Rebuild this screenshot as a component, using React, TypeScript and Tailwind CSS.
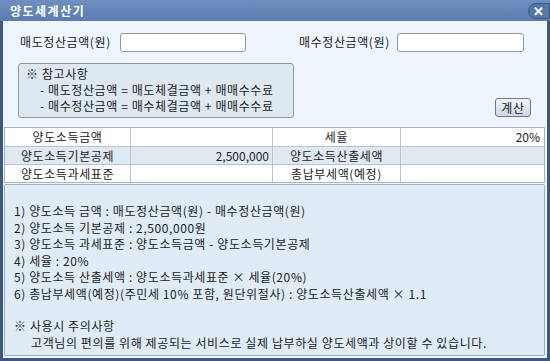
import React from 'react';

const font = { fontFamily: '"Noto Sans CJK KR", "Noto Sans", sans-serif' };

const rows = [
  { a: '양도소득금액', av: '', b: '세율', bv: '20%', shade: false },
  { a: '양도소득기본공제', av: '2,500,000', b: '양도소득산출세액', bv: '', shade: true },
  { a: '양도소득과세표준', av: '', b: '총납부세액(예정)', bv: '', shade: false },
];

const notes = [
  '1) 양도소득 금액 : 매도정산금액(원) - 매수정산금액(원)',
  '2) 양도소득 기본공제 : 2,500,000원',
  '3) 양도소득 과세표준 : 양도소득금액 - 양도소득기본공제',
  '4) 세율 : 20%',
  '5) 양도소득 산출세액 : 양도소득과세표준 × 세율(20%)',
  '6) 총납부세액(예정)(주민세 10% 포함, 원단위절사) : 양도소득산출세액 × 1.1',
];

export default function App() {
  return (
    <div
      className="w-[550px] h-[361px] bg-[#3d5a7e] p-[3px] pt-0 text-[12px] leading-[16px] text-[#222] tracking-[0.6px]"
      style={font}
    >
      {/* title bar */}
      <div className="h-[21px] -mx-[3px] px-[10px] flex items-center justify-between bg-gradient-to-b from-[#6f8fc0] to-[#5a7cae]">
        <span className="text-white font-bold text-[12px] tracking-[1.5px]">양도세계산기</span>
        <div className="w-[22px] h-[16px] -mr-[10px] rounded-l-full border border-[#3d5a80] bg-[#5576a6] flex items-center justify-center text-white font-bold text-[13px]">
          ✕
        </div>
      </div>

      <div className="h-[337px] bg-[#eef5fc] flex flex-col">
        {/* inputs */}
        <div className="flex items-center h-[42px] pl-[17px]">
          <span className="w-[100px]">매도정산금액(원)</span>
          <div className="w-[126px] h-[19px] bg-white border border-[#8e9aa8] rounded-[3px]" />
          <span className="ml-[53px] w-[98px]">매수정산금액(원)</span>
          <div className="w-[127px] h-[19px] bg-white border border-[#8e9aa8] rounded-[3px]" />
        </div>

        <div className="flex items-end pl-[15px] pr-[16px]">
          <div className="w-[276px] h-[55px] border border-[#8f9aa6] rounded-[3px] bg-[#dde8f1] px-[7px] pt-[2px] leading-[16px]">
            <div>※ 참고사항</div>
            <div className="pl-[14px]">- 매도정산금액 = 매도체결금액 + 매매수수료</div>
            <div className="pl-[14px]">- 매수정산금액 = 매수체결금액 + 매매수수료</div>
          </div>
          <div className="ml-auto mb-[1px] w-[36px] h-[19px] border border-[#6b7c90] rounded-[3px] bg-gradient-to-b from-[#f3f7fb] to-[#c9d6e4] flex items-center justify-center">
            계산
          </div>
        </div>

        {/* result table */}
        <div className="mt-[9px] ml-[1px] mr-[2px] border border-[#a7b4c2] bg-white">
          {rows.map((r, i) => (
            <div
              key={i}
              className={`flex h-[18px] items-center ${i > 0 ? 'border-t border-[#b9c4d0]' : ''} ${r.shade ? 'bg-[#dfe9f2]' : 'bg-white'}`}
            >
              <div className="w-[126px] h-full flex items-center justify-center border-r border-[#b9c4d0]">{r.a}</div>
              <div className="w-[142px] h-full flex items-center justify-end pr-[3px] border-r border-[#b9c4d0] tracking-normal">{r.av}</div>
              <div className="w-[128px] h-full flex items-center justify-center border-r border-[#b9c4d0]">{r.b}</div>
              <div className="flex-1 h-full flex items-center justify-end pr-[4px] tracking-normal">{r.bv}</div>
            </div>
          ))}
        </div>

        {/* explanation */}
        <div className="mt-[1px] ml-[1px] mr-[2px] mb-[2px] flex-1 border border-[#a0adbb] rounded-[2px] bg-[#dfecf6] pl-[9px] pt-[18px] leading-[16.5px]">
          {notes.map((n) => (
            <div key={n}>{n}</div>
          ))}
          <div className="mt-[16px]">※ 사용시 주의사항</div>
          <div className="pl-[17px]">고객님의 편의를 위해 제공되는 서비스로 실제 납부하실 양도세액과 상이할 수 있습니다.</div>
        </div>
      </div>
    </div>
  );
}
